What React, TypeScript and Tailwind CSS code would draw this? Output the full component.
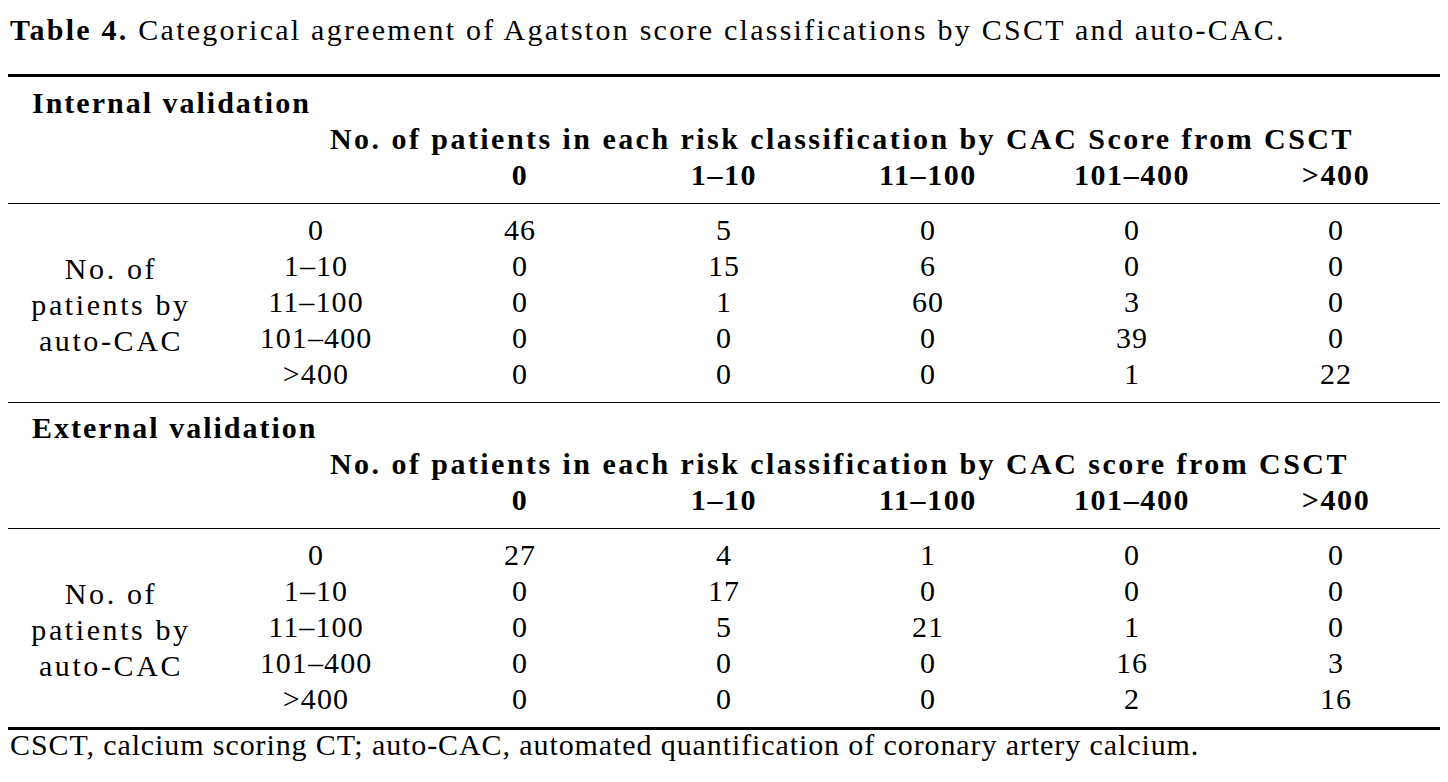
import React from "react";

const F = { fontFamily: '"Liberation Serif", "DejaVu Serif", serif' };

const cols = ["0", "1–10", "11–100", "101–400", ">400"];
const rowLabels = ["0", "1–10", "11–100", "101–400", ">400"];

function Section({ name, header, data }: { name: string; header: string; data: string[][] }) {
  return (
    <div>
      <div className="h-9 leading-9 font-bold pl-[24px] tracking-[2px]">{name}</div>
      <div className="h-9 leading-9 font-bold pl-[322px] whitespace-nowrap tracking-[2.45px]">{header}</div>
      <div className="flex h-9 leading-9 font-bold tracking-[1.6px]">
        <div className="w-[206px]" />
        <div className="w-[204px]" />
        {cols.map((c) => (
          <div key={c} className="w-[204px] text-center">{c}</div>
        ))}
      </div>
      <div className="mt-[10px] border-t border-black" />
      <div className="flex pt-[8px] pb-[10px]">
        <div className="w-[206px] flex flex-col justify-center items-center text-center leading-9 pt-[6px] tracking-[2.6px]">
          <div>No. of</div>
          <div>patients by</div>
          <div>auto-CAC</div>
        </div>
        <div className="w-[204px] flex flex-col tracking-[1.1px]">
          {rowLabels.map((r) => (
            <div key={r} className="h-9 leading-9 text-center">{r}</div>
          ))}
        </div>
        {[0, 1, 2, 3, 4].map((ci) => (
          <div key={ci} className="w-[204px] flex flex-col tracking-[1.1px]">
            {data.map((row, ri) => (
              <div key={ri} className="h-9 leading-9 text-center">{row[ci]}</div>
            ))}
          </div>
        ))}
      </div>
    </div>
  );
}

export default function App() {
  const internal = [
    ["46", "5", "0", "0", "0"],
    ["0", "15", "6", "0", "0"],
    ["0", "1", "60", "3", "0"],
    ["0", "0", "0", "39", "0"],
    ["0", "0", "0", "1", "22"],
  ];
  const external = [
    ["27", "4", "1", "0", "0"],
    ["0", "17", "0", "0", "0"],
    ["0", "5", "21", "1", "0"],
    ["0", "0", "0", "16", "3"],
    ["0", "0", "0", "2", "16"],
  ];
  return (
    <div className="w-[1448px] h-[782px] bg-white text-black text-[30px] overflow-hidden" style={F}>
      <div className="pt-[12px] pl-[10px] h-[48px] leading-9 whitespace-nowrap tracking-[2.25px]">
        <span className="font-bold">Table 4.</span> Categorical agreement of Agatston score classifications by CSCT and auto-CAC.
      </div>
      <div className="ml-[8px] w-[1432px]">
        <div className="mt-[26px] border-t-[3px] border-black" />
        <div className="pt-[8px]">
          <Section name="Internal validation" header="No. of patients in each risk classification by CAC Score from CSCT" data={internal} />
        </div>
        <div className="border-t border-black" />
        <div className="pt-[7px]">
          <Section name="External validation" header="No. of patients in each risk classification by CAC score from CSCT" data={external} />
        </div>
        <div className="border-t-[3px] border-black" />
        <div className="leading-[30px] pl-[2px] whitespace-nowrap tracking-[0.9px]">
          CSCT, calcium scoring CT; auto-CAC, automated quantification of coronary artery calcium.
        </div>
      </div>
    </div>
  );
}
